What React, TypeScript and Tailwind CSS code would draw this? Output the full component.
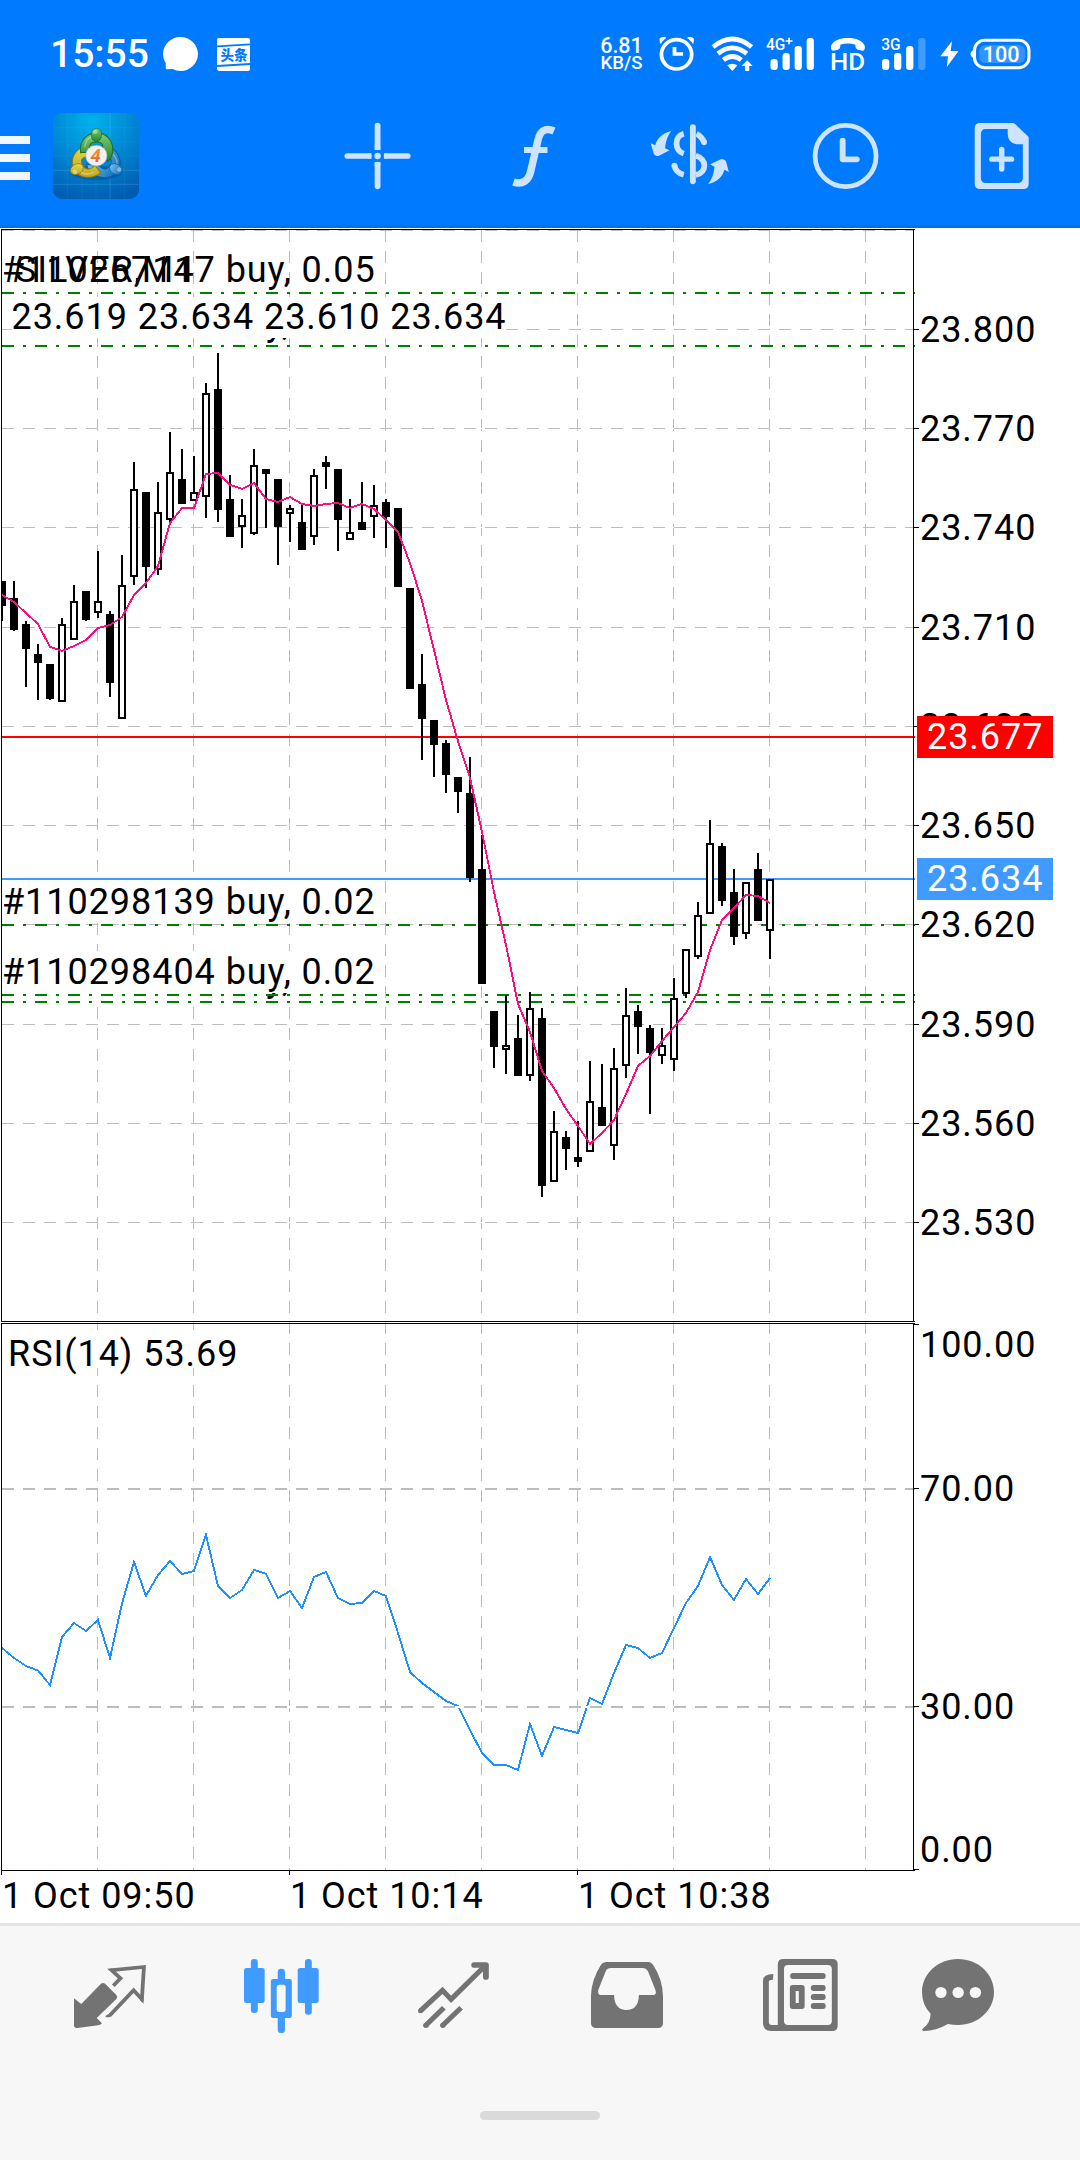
import React from "react";

type Candle = [high: number, top: number, bottom: number, low: number, up: 0 | 1];

/* y positions of each one-minute candle; candles are 12px apart */
const CANDLES: Candle[] = [
  [581, 581, 606, 621, 0], [581, 598, 630, 631, 0], [621, 624, 649, 687, 0], [644, 654, 663, 700, 0],
  [664, 664, 699, 700, 0], [618, 624, 702, 702, 1], [585, 601, 640, 640, 1], [591, 591, 620, 621, 0],
  [551, 601, 613, 618, 1], [611, 614, 683, 697, 0], [555, 585, 719, 719, 1], [462, 489, 577, 585, 1],
  [492, 492, 567, 588, 0], [482, 512, 570, 575, 1], [432, 472, 520, 523, 1], [449, 479, 504, 504, 0],
  [456, 492, 501, 501, 1], [383, 393, 497, 518, 1], [353, 389, 510, 522, 0], [475, 499, 537, 537, 0],
  [499, 515, 527, 548, 1], [449, 465, 534, 535, 1], [469, 469, 474, 528, 0], [479, 479, 527, 565, 0],
  [505, 508, 514, 542, 1], [504, 522, 550, 550, 0], [469, 475, 537, 545, 1], [456, 462, 467, 489, 0],
  [469, 469, 520, 551, 0], [499, 532, 540, 540, 1], [482, 522, 530, 530, 0], [485, 505, 517, 538, 1],
  [499, 502, 517, 548, 0], [508, 508, 587, 587, 0], [588, 588, 689, 689, 0], [654, 684, 719, 760, 0],
  [720, 720, 745, 777, 0], [740, 743, 775, 793, 0], [777, 777, 792, 813, 0], [757, 793, 878, 882, 0],
  [835, 869, 984, 984, 0], [1011, 1011, 1047, 1068, 0], [995, 1045, 1050, 1074, 1], [1015, 1038, 1076, 1076, 0],
  [992, 1008, 1076, 1081, 1], [1008, 1018, 1186, 1197, 0], [1111, 1131, 1182, 1182, 1], [1131, 1137, 1149, 1170, 0],
  [1121, 1157, 1162, 1167, 0], [1061, 1101, 1152, 1152, 1], [1064, 1107, 1126, 1126, 0], [1048, 1068, 1146, 1160, 1],
  [988, 1015, 1066, 1078, 1], [1005, 1011, 1027, 1054, 0], [1025, 1028, 1053, 1114, 0], [1028, 1045, 1056, 1064, 1],
  [978, 998, 1060, 1071, 1], [949, 949, 994, 998, 1], [902, 915, 957, 959, 1], [820, 843, 914, 914, 1],
  [843, 846, 901, 906, 0], [869, 892, 937, 945, 0], [882, 882, 934, 939, 1], [853, 869, 921, 921, 0],
  [879, 879, 931, 959, 1],
];

const AVERAGE = [
  595, 602, 613, 624, 647, 651, 646, 640, 628, 625, 617, 595, 583, 566, 523, 508, 508, 474, 473, 485, 489, 483, 499,
  502, 497, 504, 506, 504, 503, 508, 504, 509, 520, 532, 563, 601, 650, 700, 741, 778, 832, 892, 945, 1004, 1032, 1071,
  1088, 1109, 1126, 1144, 1133, 1120, 1094, 1066, 1056, 1041, 1027, 1013, 992, 950, 920, 908, 895, 896, 903,
];

const RSI = [
  1648, 1658, 1666, 1670.5, 1685, 1637, 1623, 1631, 1620, 1658, 1603.5, 1562, 1596, 1575, 1561, 1574, 1571, 1535, 1586,
  1598, 1590, 1570, 1574, 1598, 1591, 1608, 1577, 1572, 1598, 1604, 1603, 1591, 1596, 1633, 1672, 1683, 1692, 1701,
  1706, 1730, 1753, 1765, 1765, 1770, 1724, 1756, 1727, 1730, 1733, 1698, 1704, 1673, 1645, 1648, 1658, 1653, 1628,
  1603, 1586, 1557, 1585, 1600, 1579, 1594, 1578,
];

const GRID_X = [97.5, 193.5, 289.5, 385.5, 481.5, 577.5, 673.5, 769.5, 865.5];
const PRICES: [string, number][] = [
  ["23.800", 329.5], ["23.770", 428.5], ["23.740", 527.5], ["23.710", 627.5], ["23.680", 726.5],
  ["23.650", 825.5], ["23.620", 924.5], ["23.590", 1024.5], ["23.560", 1123.5], ["23.530", 1222.5],
];
const ORDER_LINES = [293, 346, 925, 995, 1002];

const toPoints = (ys: number[]) => ys.map((y, i) => `${2 + 12 * i},${y}`).join(" ");

function Level({ y, color, dash, width }: { y: number; color: string; dash: string; width: number }) {
  return (
    <g>
      <path d={`M2 ${y}H913`} stroke="#fff" strokeWidth={width} />
      <path d={`M2 ${y}H915`} stroke={color} strokeWidth={width} strokeDasharray={dash} />
    </g>
  );
}

function OrderLabel({ y, text }: { y: number; text: string }) {
  return (
    <g>
      <rect x="3" y={y - 33} width="373" height="42" fill="#fff" />
      <text x="2" y={y}>{text}</text>
    </g>
  );
}

function Chart() {
  return (
    <svg
      viewBox="0 228 1080 1695"
      className="block h-[1695px] w-[1080px] bg-white"
      fontFamily="Roboto, sans-serif"
      fontSize="36"
      letterSpacing="0.95"
    >
      <g shapeRendering="crispEdges" fill="none">
        {GRID_X.map((x) => (
          <g key={x} stroke="#bdbdbd" strokeDasharray="12 9">
            <path d={`M${x} 230V1321`} />
            <path d={`M${x} 1322V1870`} />
          </g>
        ))}
        <path d="M2 230.5H913" stroke="#bdbdbd" strokeDasharray="12 9" />
        {PRICES.map(([p, y]) => (
          <Level key={p} y={y} color="#bdbdbd" dash="12 9" width={1} />
        ))}
        {PRICES.map(([p, y]) => (
          <path key={p} d={`M913 ${y}H919`} stroke="#000" />
        ))}
      </g>

      <text x="266" y="335">y,</text>
      <text x="2" y="282">#110267147 buy, 0.05</text>
      <text x="15" y="282">SILVER,M1</text>
      <rect x="12" y="297" width="493" height="41" fill="#fff" />
      <text x="11.5" y="329">23.619 23.634 23.610 23.634</text>
      <OrderLabel y={914} text="#110298139 buy, 0.02" />
      <rect x="3" y="960" width="373" height="40" fill="#fff" />
      <text x="266" y="991">y,</text>
      <OrderLabel y={984} text="#110298404 buy, 0.02" />

      <g shapeRendering="crispEdges" fill="none">
        {ORDER_LINES.map((y) => (
          <path key={y} d={`M2 ${y}H915`} stroke="#008000" strokeWidth="2" strokeDasharray="12 9 3 9" />
        ))}
        <path d="M2 737H915" stroke="#f00" strokeWidth="2" />
        <path d="M2 879H915" stroke="#3f9bff" strokeWidth="2" />
      </g>

      <g shapeRendering="crispEdges">
        {CANDLES.map(([high, top, bottom, low, up], i) => {
          const x = 2 + 12 * i;
          const left = Math.max(2, x - 4);
          return (
            <g key={i}>
              <rect x={x - 1} y={high} width="2" height={low - high} />
              <rect x={left} y={top} width={x + 4 - left} height={bottom - top} />
              {up === 1 && <rect x={x - 2} y={top + 2} width="4" height={bottom - top - 4} fill="#fff" />}
            </g>
          );
        })}
        <polyline points={toPoints(AVERAGE)} fill="none" stroke="#ff0a80" strokeWidth="1.9" />
      </g>

      <rect x="3" y="1330" width="233" height="38" fill="#fff" />
      <text x="8" y="1366" letterSpacing="0.95">RSI(14) 53.69</text>
      <g shapeRendering="crispEdges" fill="none">
        <polyline points={toPoints(RSI)} stroke="#1e90ff" strokeWidth="1.9" />
        <Level y={1489} color="#bdbdbd" dash="12 9" width={2} />
        <Level y={1707} color="#bdbdbd" dash="12 9" width={2} />
        <path
          d="M1 229.5H915M1.5 229V1322M1 1321.5H915M1 1323.5H915M1.5 1323V1875M1 1870.5H915M913.5 229V1322M913.5 1323V1871M289.5 1870V1875M577.5 1870V1875M913 1324.5H919M913 1488.5H919M913 1706.5H919M913 1869.5H919"
          stroke="#000"
        />
      </g>

      {PRICES.map(([p, y]) => (
        <text key={p} x="920" y={y + 12.5}>{p}</text>
      ))}
      <rect x="917" y="716" width="136" height="42" fill="#f00" />
      <text x="927" y="749" fill="#fff">23.677</text>
      <rect x="917" y="858" width="136" height="42" fill="#3f9bff" />
      <text x="927" y="891" fill="#fff">23.634</text>
      <text x="920" y="1356.5">100.00</text>
      <text x="920" y="1501">70.00</text>
      <text x="920" y="1719">30.00</text>
      <text x="920" y="1861.5">0.00</text>
      <text x="2" y="1908">1 Oct 09:50</text>
      <text x="290" y="1908">1 Oct 10:14</text>
      <text x="578" y="1908">1 Oct 10:38</text>
    </svg>
  );
}

function SignalBars({ x, weak }: { x: number; weak?: boolean }) {
  return (
    <g transform={`translate(${x} 0)`}>
      <rect x="0" y="177" width="21" height="33" rx="9" />
      <rect x="35" y="159" width="21" height="51" rx="9" />
      <rect x="70" y="138" width="21" height="72" rx="9" />
      <rect x="105" y="114" width="21" height="96" rx="9" opacity={weak ? 0.25 : 1} />
    </g>
  );
}

function StatusBar() {
  const icon = "h-[38px] shrink-0 overflow-visible";
  return (
    <div className="flex h-[108px] items-center pl-[50px] pr-[49px] font-['Roboto'] font-medium text-white">
      <span className="w-[103px] text-[39px] leading-none">15:55</span>
      <svg viewBox="470 105 108 114" preserveAspectRatio="none" className={`${icon} ml-[9px] w-[37px]`} fill="#fff">
        <path d="M524 111C552 111 575 134 575 162S552 213 524 213Q512 213 501 207L486 208Q480 208 481 200L481 189C476 181 473 172 473 162C473 134 496 111 524 111Z" />
      </svg>
      <svg viewBox="0 0 33 33" className="ml-[18px] h-[33px] w-[33px]" fill="#fff">
        <rect width="33" height="33" rx="2" />
        <path d="M0 8.3L33 6.3M0 28L33 26" stroke="#007aff" strokeWidth="1.8" />
        <text x="3.5" y="22" fontSize="13.5" fontWeight="900" fill="#007aff" fontFamily="'Noto Sans CJK SC', sans-serif">头条</text>
      </svg>
      <div className="ml-auto flex w-[42px] flex-col items-center leading-none">
        <span className="text-[21.5px] leading-[18px]">6.81</span>
        <span className="text-[18.5px] leading-[16px]">KB/S</span>
      </div>
      <svg viewBox="346 105 102 114" preserveAspectRatio="none" className={`${icon} ml-[17px] w-[35.1px]`} fill="none" stroke="#fff">
        <circle cx="397" cy="163" r="44" strokeWidth="11" />
        <path d="M391 141V162H416" strokeWidth="11" />
        <path d="M351 130L350 117Q352 112 366 114M444 130L445 117Q443 112 429 114" strokeWidth="5" fill="#fff" />
      </svg>
      <svg viewBox="496 105 124 114" preserveAspectRatio="none" className={`${icon} ml-[16.6px] w-[42.7px]`} fill="none" stroke="#fff" strokeWidth="14">
        <path d="M502 141Q558 93 614 141M516 161Q558 126 600 161M532 180Q558 159 584 180" />
        <path d="M543 196Q558 187 573 196L558 213Z" fill="#fff" stroke="none" />
        <path d="M601 181L617 198H607V213H595V198H585Z" fill="#fff" stroke="none" />
      </svg>
      <svg viewBox="655 105 141 114" preserveAspectRatio="none" className={`${icon} ml-[12px] w-[48.6px]`} fill="#fff">
        <text x="655" y="150" fontSize="49" fontWeight="500" textLength="56" lengthAdjust="spacingAndGlyphs">4G</text>
        <path d="M722 113V133M712 123H732" stroke="#fff" strokeWidth="5" />
        <SignalBars x={668} />
      </svg>
      <svg viewBox="840 105 104 114" preserveAspectRatio="none" className={`${icon} ml-[15.2px] w-[35.8px]`} fill="#fff">
        <path d="M843 137C850 122 868 114 892 114S934 122 941 137Q943 152 934 152L921 149Q913 146 914 134Q892 127 870 134Q871 146 863 149L850 152Q841 152 843 137Z" />
        <text x="840" y="210" fontSize="74" fontWeight="500" textLength="102" lengthAdjust="spacingAndGlyphs">HD</text>
      </svg>
      <svg viewBox="990 105 130 114" preserveAspectRatio="none" className={`${icon} ml-[15.8px] w-[44.8px]`} fill="#fff">
        <text x="991" y="150" fontSize="49" fontWeight="500" textLength="56" lengthAdjust="spacingAndGlyphs">3G</text>
        <SignalBars x={993} weak />
      </svg>
      <svg viewBox="1160 105 56 114" preserveAspectRatio="none" className={`${icon} ml-[13.7px] w-[19.3px]`} fill="#fff">
        <path d="M1195 123L1161 169H1183L1180 201L1214 153H1191Z" />
      </svg>
      <svg viewBox="1248 105 177 114" preserveAspectRatio="none" className={`${icon} ml-[11px] w-[61px]`} fill="#fff">
        <rect x="1261" y="121" width="158" height="82" rx="30" fill="none" stroke="#fff" strokeWidth="9" />
        <path d="M1258 149V175Q1249 170 1249 162T1258 149Z" />
        <rect x="1275" y="135" width="133" height="54" rx="18" opacity="0.2" />
        <text x="1285" y="185" fontSize="65" fontWeight="500" textLength="107" lengthAdjust="spacingAndGlyphs">100</text>
      </svg>
    </div>
  );
}

function Lobe({ fill, dark, rotate }: { fill: string; dark: string; rotate: number }) {
  return (
    <g transform={`rotate(${rotate} 280 466)`}>
      <path d="M280 392C308 392 328 414 328 444Q328 464 314 478L296 450Q306 420 280 420T262 450L234 452C230 418 252 392 280 392Z" fill={`url(#${fill})`} stroke={dark} strokeWidth="3" />
      <path d="M246 436Q250 404 276 402" stroke="#fff" strokeWidth="4" opacity="0.35" fill="none" />
      <ellipse cx="280" cy="399" rx="15" ry="20" fill={`url(#${fill})`} stroke={dark} strokeWidth="2" />
      <ellipse cx="276" cy="390" rx="7" ry="6" fill="#fff" opacity="0.4" />
    </g>
  );
}

function AppLogo() {
  return (
    <svg viewBox="154 339 250 258" preserveAspectRatio="none" className="ml-[23px] h-[86px] w-[86px] rounded-[9px]">
      <defs>
        <radialGradient id="sky" cx="0.45" cy="0.1" r="0.95">
          <stop offset="0" stopColor="#00b3ec" />
          <stop offset="0.5" stopColor="#0088d4" />
          <stop offset="1" stopColor="#005cb0" />
        </radialGradient>
        <linearGradient id="green" x2="0" y2="1"><stop stopColor="#7fd07a" /><stop offset="1" stopColor="#23802b" /></linearGradient>
        <linearGradient id="yellow" x2="1" y2="1"><stop stopColor="#b59c15" /><stop offset="1" stopColor="#f2e558" /></linearGradient>
        <linearGradient id="blue" x2="0" y2="1"><stop stopColor="#1670b8" /><stop offset="1" stopColor="#6cc4f0" /></linearGradient>
        <linearGradient id="four" x2="0" y2="1"><stop stopColor="#f7a823" /><stop offset="1" stopColor="#e2571f" /></linearGradient>
      </defs>
      <rect x="154" y="339" width="250" height="258" fill="url(#sky)" />
      <path d="M196 339V597M238 339V597M279 339V597M362 339V597M154 383H404M154 426H404M154 468H404" stroke="#5ad0ff" strokeWidth="2" opacity="0.12" />
      <path d="M320 339V597M154 511H404M154 553H404" stroke="#7fdcff" strokeWidth="2" opacity="0.3" />
      <ellipse cx="280" cy="518" rx="75" ry="22" fill="#003f80" opacity="0.35" />
      <g transform="translate(0 6)">
        <Lobe fill="blue" dark="#0d5c9f" rotate={122} />
        <Lobe fill="yellow" dark="#86780f" rotate={238} />
        <Lobe fill="green" dark="#1d6d29" rotate={0} />
      </g>
      <circle cx="280" cy="467" r="31" fill="#f1f1f1" stroke="#aaa" strokeWidth="2" />
      <text x="263" y="486" fontSize="54" fontWeight="700" fontStyle="italic" fontFamily="Roboto, sans-serif" fill="url(#four)">4</text>
    </svg>
  );
}

function Toolbar() {
  const icon = "h-[70px] shrink-0";
  return (
    <div className="flex h-24 items-center">
      <div className="mt-[4px] flex w-[30px] flex-col gap-[10px]">
        <span className="h-[8px] bg-[#f0f7ff]" />
        <span className="h-[8px] bg-[#f0f7ff]" />
        <span className="h-[8px] bg-[#f0f7ff]" />
      </div>
      <AppLogo />
      <svg viewBox="1000 363 196 210" preserveAspectRatio="none" className={`${icon} ml-[205.4px] w-[67.5px]`} stroke="#cce4ff" strokeWidth="17" strokeLinecap="round">
        <path d="M1097.500 377V442M1097.500 494V559M1010 468H1071M1124 468H1185" />
        <circle cx="1097.500" cy="468" r="9.500" fill="#cce4ff" stroke="none" />
        <path d="M1097.500 440V450M1097.500 486V496M1070 468H1080M1116 468H1126" strokeLinecap="butt" />
      </svg>
      <svg viewBox="510 121 48 70" className={`${icon} ml-[98.1px] w-[48px]`} fill="none" stroke="#cce4ff">
        <path d="M554 131C545 127 540 131 538 140L531 170C529 181 522 185 513.500 182" strokeWidth="7.500" />
        <path d="M524 150H547.500" strokeWidth="6" />
      </svg>
      <svg viewBox="320 363 232 210" preserveAspectRatio="none" className={`${icon} ml-[92.2px] w-[79.9px]`} fill="none" stroke="#cce4ff" strokeWidth="17">
        <path d="M444.500 381V544" strokeLinecap="round" />
        <path d="M418 401C390 408 390 452 418 461M455 401Q469 408 477 426" />
        <path d="M477 426V427M391 498V497" strokeLinecap="round" />
        <path d="M391 497Q395 518 418 524M453 467C486 476 486 518 453 525" />
        <path d="M382 393C355 400 340 416 335 436L322 430L331 461Q334 468 345 468L377 451L364 445C365 425 372 405 382 393Z" fill="#cce4ff" stroke="none" />
        <path d="M488 552C515 546 531 530 536 509L549 516L541 485Q538 477 527 477L495 493L507 500C506 520 499 540 488 552Z" fill="#cce4ff" stroke="none" />
      </svg>
      <svg viewBox="791 363 195 210" preserveAspectRatio="none" className={`${icon} ml-[82.3px] w-[67.2px]`} fill="none" stroke="#cce4ff">
        <ellipse cx="888.500" cy="468" rx="88.500" ry="92" strokeWidth="14" />
        <path d="M880 422V478H921" strokeWidth="17" strokeLinecap="round" strokeLinejoin="round" />
      </svg>
      <svg viewBox="1261 363 161 210" preserveAspectRatio="none" className={`${icon} ml-[94.6px] w-[55.4px]`} fill="#cce4ff">
        <path fillRule="evenodd" d="M1279 369H1377L1420 411V551Q1420 567 1404 567H1279Q1263 567 1263 551V385Q1263 369 1279 369ZM1296 387Q1281 387 1281 403V534Q1281 549 1296 549H1388Q1403 549 1403 534V433H1384Q1360 429 1359 403V387Z" />
        <path d="M1341.500 448V507M1313 477.500H1370" stroke="#cce4ff" strokeWidth="16" strokeLinecap="round" />
      </svg>
    </div>
  );
}

function BottomNav() {
  const icon = "h-[74px] shrink-0";
  return (
    <div className="flex h-[237px] flex-col border-t-[3px] border-[#e5e5e5] bg-[#f7f7f7] pt-[33px]">
      <div className="flex">
        <svg viewBox="215 177 209 222" preserveAspectRatio="none" className={`${icon} ml-[74px] w-[72px]`} fill="#737373">
          <path d="M215 295L236 312L292 253Q299 245 306 252L338 285Q343 291 338 297L281 354L296 370Q294 375 285 376L225 384Q215 385 215 376Z" />
          <path d="M329 257L350 235L324 210.500L418 201L412 298L388 271L318 347" fill="none" stroke="#737373" strokeWidth="11" />
          <path d="M318 210L323 205L335 210L328 216ZM306 348L314 343L322 348L318 352H308ZM406 299L412 306L417 303V290Z" />
        </svg>
        <svg viewBox="709 177 217 222" preserveAspectRatio="none" className={`${icon} ml-[98.1px] w-[74.7px]`} fill="#3f9bff">
          <rect x="709" y="204" width="60" height="105" rx="7" />
          <rect x="729" y="177" width="20" height="162" rx="9" />
          <rect x="865" y="204" width="61" height="105" rx="7" />
          <rect x="886" y="177" width="20" height="167" rx="9" />
          <path fillRule="evenodd" d="M794 237H807V216Q807 206 817.500 206T828 216V237H841Q848 237 848 244V347Q848 354 841 354H828V389Q828 399 817.500 399T807 389V354H794Q787 354 787 347V244Q787 237 794 237ZM811 254Q804 254 804 262V329Q804 336 811 336H823Q830 336 830 329V262Q830 254 823 254Z" />
        </svg>
        <svg viewBox="1214 177 206 222" preserveAspectRatio="none" className={`${icon} ml-[99.2px] w-[71px]`} fill="none" stroke="#737373" strokeWidth="15">
          <path d="M1222 332L1285 271L1310 298L1408 198" />
          <path d="M1377 195H1411V231" strokeWidth="17" strokeLinecap="round" strokeLinejoin="round" />
          <path d="M1237 376L1289 323M1286 376L1339 323" />
          <g fill="#737373" stroke="none">
            <circle cx="1221.500" cy="332" r="7.500" />
            <circle cx="1237" cy="376" r="8" />
            <circle cx="1286" cy="376" r="8" />
          </g>
        </svg>
        <svg viewBox="148 177 209 222" preserveAspectRatio="none" className={`${icon} ml-[102px] w-[72px]`} fill="#737373">
          <path fillRule="evenodd" d="M192 186H314Q323 186 328 194Q357 239 357 290V369Q357 384 342 384H163Q148 384 148 369V286Q149 240 177 194Q182 186 192 186ZM206 204Q195 204 191 213L169 270Q167 285 176 285H215Q216 330 251 330T287 285H328Q340 285 335 270L313 213Q308 204 299 204Z" />
        </svg>
        <svg viewBox="648 177 217 222" preserveAspectRatio="none" className={`${icon} ml-[100.1px] w-[74.7px]`} fill="#737373">
          <path fillRule="evenodd" d="M707 177H849Q865 177 865 193V377Q865 393 849 393H672Q648 393 648 369V242Q648 222 678 222L677 239Q665 239 665 245V366Q665 375 674 375H691V193Q691 177 707 177ZM721 195Q709 195 709 207V363Q709 375 721 375H836Q848 375 848 363V207Q848 195 836 195Z" />
          <rect x="727" y="219" width="103" height="18" rx="8" />
          <rect x="787" y="255" width="43" height="18" rx="8" />
          <rect x="787" y="282" width="43" height="18" rx="8" />
          <rect x="787" y="309" width="43" height="18" rx="8" />
          <path fillRule="evenodd" d="M734 255H761Q769 255 769 263V319Q769 327 761 327H734Q726 327 726 319V263Q726 255 734 255ZM743 273V309H752V273Z" />
        </svg>
        <svg viewBox="1109 177 209 222" preserveAspectRatio="none" className={`${icon} ml-[84.1px] w-[72px]`} fill="#737373">
          <path d="M1213.500 177C1271 177 1318 221 1318 276S1271 375 1213.500 375Q1198 375 1184 372Q1150 393 1115 393Q1105 392 1113 384Q1133 370 1134 341Q1109 315 1109 276C1109 221 1156 177 1213.500 177Z" />
          <g fill="#f7f7f7">
            <circle cx="1164" cy="277.500" r="16.500" />
            <circle cx="1214" cy="277.500" r="16.500" />
            <circle cx="1264" cy="277.500" r="16.500" />
          </g>
        </svg>
      </div>
      <div className="mx-auto mt-[78px] h-[9px] w-[120px] rounded-full bg-[#dadada]" />
    </div>
  );
}

export default function App() {
  return (
    <main className="flex h-[2160px] w-[1080px] flex-col overflow-hidden bg-white">
      <header className="h-[228px] shrink-0 border-b-[3px] border-[#0070e6] bg-[#007aff]">
        <StatusBar />
        <Toolbar />
      </header>
      <Chart />
      <BottomNav />
    </main>
  );
}
